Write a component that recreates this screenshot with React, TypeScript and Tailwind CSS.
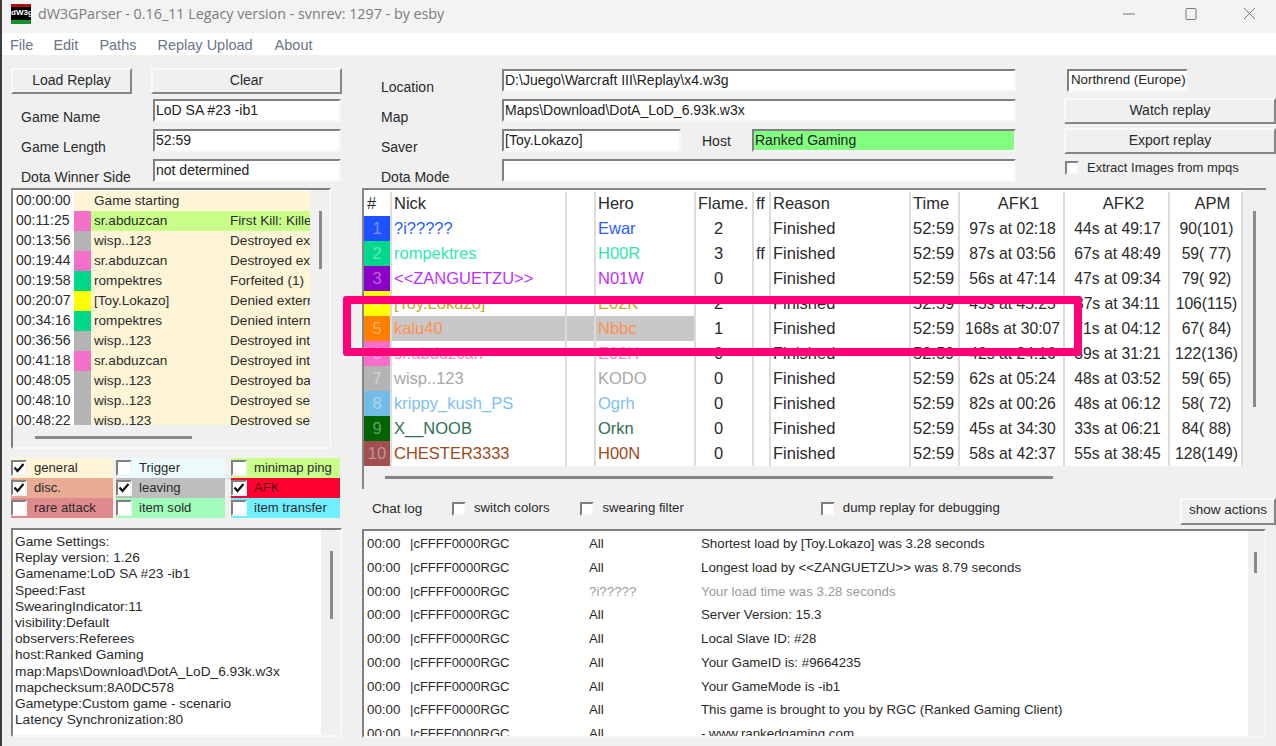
import React from "react";

const sunken = "border-2 border-t-[#808080] border-l-[#808080] border-r-[#f7f7f7] border-b-[#f7f7f7]";
const raised = "border-2 border-t-[#fafafa] border-l-[#fafafa] border-r-[#858585] border-b-[#858585] bg-[#f0f0f0] flex items-center justify-center pb-[2px] text-[#2a2a2a]";

function Box({ checked = false, small = false }: { checked?: boolean; small?: boolean }) {
  return (
    <span className={`shrink-0 ${small ? "w-[14px] h-[14px]" : "w-[16px] h-[16px]"} bg-white border-2 border-t-[#808080] border-l-[#808080] border-r-[#f4f4f4] border-b-[#f4f4f4] flex items-center justify-center`}>
      {checked && (
        <svg width="12" height="12" viewBox="0 0 12 12">
          <path d="M1.5 5.5 L4.5 9 L10.5 2" fill="none" stroke="#111" strokeWidth="2.2" />
        </svg>
      )}
    </span>
  );
}

function Input({ value, w, bg = "bg-white" }: { value: string; w: string; bg?: string }) {
  return <div className={`${sunken} ${w} ${bg} h-[23px] pl-[1px] leading-[18px] whitespace-nowrap overflow-hidden text-[#222]`}>{value}</div>;
}

const events = [
  ["00:00:00", "bg-[#fdf5d6]", "Game starting", "", "bg-[#fdf5d6]"],
  ["00:11:25", "bg-[#f570c8]", "sr.abduzcan", "First Kill: Killed", "bg-[#c8ff8a]"],
  ["00:13:56", "bg-[#b4b4b4]", "wisp..123", "Destroyed ex", "bg-[#fdf5d6]"],
  ["00:19:44", "bg-[#f570c8]", "sr.abduzcan", "Destroyed ex", "bg-[#fdf5d6]"],
  ["00:19:58", "bg-[#00d888]", "rompektres", "Forfeited (1)", "bg-[#fdf5d6]"],
  ["00:20:07", "bg-[#ffff00]", "[Toy.Lokazo]", "Denied extern", "bg-[#fdf5d6]"],
  ["00:34:16", "bg-[#00d888]", "rompektres", "Denied interm", "bg-[#fdf5d6]"],
  ["00:36:56", "bg-[#b4b4b4]", "wisp..123", "Destroyed int", "bg-[#fdf5d6]"],
  ["00:41:18", "bg-[#f570c8]", "sr.abduzcan", "Destroyed int", "bg-[#fdf5d6]"],
  ["00:48:05", "bg-[#b4b4b4]", "wisp..123", "Destroyed ba", "bg-[#fdf5d6]"],
  ["00:48:10", "bg-[#b4b4b4]", "wisp..123", "Destroyed se", "bg-[#fdf5d6]"],
  ["00:48:22", "bg-[#b4b4b4]", "wisp..123", "Destroyed se", "bg-[#fdf5d6]"],
];

const filters: [string, boolean, string][] = [
  ["general", true, "bg-[#fdf5d6]"],
  ["Trigger", false, "bg-[#ebfbfb]"],
  ["minimap ping", false, "bg-[#c8ff8a]"],
  ["disc.", true, "bg-[#e8ab93]"],
  ["leaving", true, "bg-[#bebebe]"],
  ["AFK", true, "bg-[#ff0030]"],
  ["rare attack", false, "bg-[#e08a90]"],
  ["item sold", false, "bg-[#a0fcb8]"],
  ["item transfer", false, "bg-[#70f0ff]"],
];

const settings = [
  "Game Settings:",
  "Replay version: 1.26",
  "Gamename:LoD SA #23 -ib1",
  "Speed:Fast",
  "SwearingIndicator:11",
  "visibility:Default",
  "observers:Referees",
  "host:Ranked Gaming",
  "map:Maps\\Download\\DotA_LoD_6.93k.w3x",
  "mapchecksum:8A0DC578",
  "Gametype:Custom game - scenario",
  "Latency Synchronization:80",
];

const players = [
  ["1", "bg-[#1f52ff]", "text-[#2b5cff]", "?i?????", "Ewar", "2", "", "97s at 02:18", "44s at 49:17", "90(101)"],
  ["2", "bg-[#00d98c]", "text-[#30e8b0]", "rompektres", "H00R", "3", "ff", "87s at 03:56", "67s at 48:49", "59( 77)"],
  ["3", "bg-[#8a00c8]", "text-[#c030ff]", "<<ZANGUETZU>>", "N01W", "0", "", "56s at 47:14", "47s at 09:34", "79( 92)"],
  ["4", "bg-[#ffff00]", "text-[#c8a820]", "[Toy.Lokazo]", "E02K", "2", "", "45s at 45:25", "37s at 34:11", "106(115)"],
  ["5", "bg-[#ff8000]", "text-[#ff9050]", "kalu40", "Nbbc", "1", "", "168s at 30:07", "71s at 04:12", "67( 84)"],
  ["6", "bg-[#f66ec8]", "text-[#ff80d0]", "sr.abduzcan", "E02H", "0", "", "42s at 24:16", "39s at 31:21", "122(136)"],
  ["7", "bg-[#b4b4b4]", "text-[#a8a8a8]", "wisp..123", "KODO", "0", "", "62s at 05:24", "48s at 03:52", "59( 65)"],
  ["8", "bg-[#74bce8]", "text-[#80c0f0]", "krippy_kush_PS", "Ogrh", "0", "", "82s at 00:26", "48s at 06:12", "58( 72)"],
  ["9", "bg-[#006400]", "text-[#2e7050]", "X__NOOB", "Orkn", "0", "", "45s at 34:30", "33s at 06:21", "84( 88)"],
  ["10", "bg-[#a05050]", "text-[#a04a20]", "CHESTER3333", "H00N", "0", "", "58s at 42:37", "55s at 38:45", "128(149)"],
];

const chat: [string, string, boolean][] = [
  ["All", "Shortest load by [Toy.Lokazo] was 3.28 seconds", false],
  ["All", "Longest load by <<ZANGUETZU>> was 8.79 seconds", false],
  ["?i?????", "Your load time was 3.28 seconds", true],
  ["All", "Server Version: 15.3", false],
  ["All", "Local Slave ID: #28", false],
  ["All", "Your GameID is: #9664235", false],
  ["All", "Your GameMode is -ib1", false],
  ["All", "This game is brought to you by RGC (Ranked Gaming Client)", false],
  ["All", "- www.rankedgaming.com", false],
];

const cols = "grid grid-cols-[28px_175px_29px_100px_58px_17px_140px_49px_105px_105px_73px]";
const cell = "border-r-2 border-[#dcdcdc] pl-[2px] whitespace-nowrap overflow-hidden";

export default function App() {
  return (
    <div className="relative w-[1276px] h-[746px] overflow-hidden bg-[#f0f0f0] border-l-2 border-[#3c3c3c] text-[14px] text-[#2a2a2a] font-['Liberation_Sans',Arial,sans-serif]">
      {/* title bar */}
      <div className="h-[33px] bg-[#f3f3f3] flex items-center pl-[9px] pb-[6px]">
        <div className="w-[20px] h-[20px] bg-black flex flex-col justify-between">
          <div className="h-[3px] bg-[#b01010]" />
          <span className="text-white font-bold text-[8px] leading-none text-center">dW3g</span>
          <div className="h-[4px] bg-[#159030]" />
        </div>
        <span className="ml-[7px] text-[14.3px] text-[#7c7c7c] font-['Open_Sans',sans-serif] whitespace-nowrap">dW3GParser - 0.16_11 Legacy version - svnrev: 1297 - by esby</span>
        <div className="ml-auto flex items-center text-[#777]">
          <svg className="mr-[50px]" width="12" height="12" viewBox="0 0 12 12"><path d="M0 6h12" stroke="#777" /></svg>
          <svg className="mr-[46px]" width="12" height="12" viewBox="0 0 12 12"><rect x="1" y="0.5" width="10" height="11" rx="1" fill="none" stroke="#777" /></svg>
          <svg className="mr-[20px]" width="13" height="13" viewBox="0 0 13 13"><path d="M1 1l11 11M12 1L1 12" stroke="#777" /></svg>
        </div>
      </div>
      {/* menu */}
      <div className="h-[22px] bg-white flex items-center pt-[3px] text-[14.5px] text-[#687487]">
        <span className="ml-[8px]">File</span>
        <span className="ml-[20px]">Edit</span>
        <span className="ml-[21px]">Paths</span>
        <span className="ml-[21px]">Replay Upload</span>
        <span className="ml-[22px]">About</span>
      </div>

      <div className="flex pl-[9px]">
        {/* left column */}
        <div className="w-[351px] shrink-0 pt-[13px]">
          <div className="flex">
            <button className={`${raised} w-[121px] h-[26px]`}>Load Replay</button>
            <button className={`${raised} w-[191px] h-[26px] ml-[19px]`}>Clear</button>
          </div>
          <div className="flex flex-col gap-[7px] mt-[5px]">
            {[["Game Name", "LoD SA #23 -ib1"], ["Game Length", "52:59"], ["Dota Winner Side", "not determined"]].map(([l, v]) => (
              <div key={l} className="flex h-[23px]">
                <span className="w-[142px] pl-[10px] pt-[8px] whitespace-nowrap">{l}</span>
                <Input value={v} w="w-[188px]" />
              </div>
            ))}
          </div>
          <div className={`${sunken} w-[320px] h-[261px] mt-[6px] flex`}>
            <div className="w-[297px] h-[235px] overflow-hidden bg-white pl-[1px] pt-[1px] text-[13.6px]">
              {events.map((e) => (
                <div key={e[0]} className="flex h-[20px] leading-[19px]">
                  <span className="w-[60px] pl-[2px] shrink-0 text-[14px]">{e[0]}</span>
                  <span className={`w-[17px] shrink-0 ${e[1]}`} />
                  <div className={`w-[138px] shrink-0 pl-[3px] whitespace-nowrap ${e[4]}`}>{e[2]}</div>
                  <div className={`flex-1 pl-[1px] whitespace-nowrap overflow-hidden ${e[4]}`}>{e[3]}</div>
                </div>
              ))}
            </div>
            <div className="w-[3px] h-[58px] ml-[9px] mt-[21px] bg-[#8a8a8a]" />
          </div>
          <div className="w-[320px] h-0 relative">
            <div className="absolute left-[24px] top-[-13px] w-[157px] h-[3px] bg-[#8a8a8a]" />
          </div>
          <div className="grid grid-cols-[102px_109px_112px] gap-x-[3px] w-[331px] mt-[9px] text-[13.1px]">
            {filters.map(([l, c, bg], i) => (
              <div key={l} className={`h-[20px] flex items-center ${bg} ${i % 3 === 2 ? "ml-[3px]" : ""}`}>
                <Box checked={c} />
                <span className={`ml-[7px] whitespace-nowrap ${l === "AFK" ? "text-[#5a0010]" : ""}`}>{l}</span>
              </div>
            ))}
          </div>
          <div className={`${sunken} w-[331px] h-[209px] mt-[10px] flex`}>
            <div className="w-[308px] h-full bg-white pl-[2px] pt-[4px] text-[13.7px] leading-[16.2px] whitespace-nowrap overflow-hidden">
              {settings.map((s) => <div key={s}>{s}</div>)}
            </div>
            <div className="w-[3px] h-[68px] ml-[9px] mt-[21px] bg-[#8a8a8a]" />
          </div>
        </div>

        {/* right column */}
        <div className="flex-1 min-w-0">
          <div className="flex h-[133px] pt-[14px]">
            <div className="w-[654px] shrink-0">
              {[
                ["Location", "D:\\Juego\\Warcraft III\\Replay\\x4.w3g"],
                ["Map", "Maps\\Download\\DotA_LoD_6.93k.w3x"],
              ].map(([l, v]) => (
                <div key={l} className="flex h-[23px] mb-[7px]">
                  <span className="w-[140px] pl-[19px] pt-[8px]">{l}</span>
                  <Input value={v} w="w-[514px]" />
                </div>
              ))}
              <div className="flex h-[23px] mb-[7px]">
                <span className="w-[140px] pl-[19px] pt-[8px]">Saver</span>
                <Input value="[Toy.Lokazo]" w="w-[179px]" />
                <span className="w-[71px] pl-[21px] pt-[2px]">Host</span>
                <Input value="Ranked Gaming" w="w-[264px]" bg="bg-[#80ff80]" />
              </div>
              <div className="flex h-[23px]">
                <span className="w-[140px] pl-[19px] pt-[8px]">Dota Mode</span>
                <Input value="" w="w-[514px]" />
              </div>
            </div>
            <div className="ml-[48px] flex-1">
              <div className="ml-[3px]"><Input value="Northrend (Europe)" w="w-[121px] text-[13.3px] pl-[2px]" /></div>
              <button className={`${raised} w-[212px] h-[26px] mt-[6px]`}>Watch replay</button>
              <button className={`${raised} w-[212px] h-[26px] mt-[4px]`}>Export replay</button>
              <div className="flex items-center mt-[6px] ml-[1px] h-[16px] text-[13px]">
                <Box small />
                <span className="ml-[8px] whitespace-nowrap">Extract Images from mpqs</span>
              </div>
            </div>
          </div>

          {/* players table */}
          <div className="w-[904px] h-[301px] border-t-2 border-l-2 border-[#858585] flex">
            <div className="w-[879px] shrink-0">
              <div className="bg-white text-[16.5px] text-[#2a2a2a] pt-[2px]">
                <div className={`${cols} h-[24px] leading-[22px]`}>
                  <div className={`${cell} pl-[3px]`}>#</div>
                  <div className={cell}>Nick</div>
                  <div className={cell}></div>
                  <div className={cell}>Hero</div>
                  <div className={cell}>Flame.</div>
                  <div className={cell}>ff</div>
                  <div className={cell}>Reason</div>
                  <div className={cell}>Time</div>
                  <div className={`${cell} text-center pl-[14px]`}>AFK1</div>
                  <div className={`${cell} text-center pl-[14px]`}>AFK2</div>
                  <div className={`${cell} text-center pl-[14px]`}>APM</div>
                </div>
                {players.map((p) => {
                  const hi = p[0] === "5" ? "bg-[#c8c8c8]" : "";
                  return (
                    <div key={p[0]} className={`${cols} h-[25px] leading-[25px]`}>
                      <div className={`${p[1]} text-center text-white/40 border-r-2 border-[#dcdcdc]`}>{p[0]}</div>
                      <div className={`${cell} ${p[2]} ${hi}`}>{p[3]}</div>
                      <div className={`${cell} ${hi}`}></div>
                      <div className={`${cell} ${p[2]} ${hi}`}>{p[4]}</div>
                      <div className={`${cell} pl-[18px]`}>{p[5]}</div>
                      <div className={cell}>{p[6]}</div>
                      <div className={cell}>Finished</div>
                      <div className={cell}>52:59</div>
                      <div className={`${cell} text-center text-[15.7px]`}>{p[7]}</div>
                      <div className={`${cell} text-center text-[15.7px]`}>{p[8]}</div>
                      <div className={`${cell} text-center text-[15.7px]`}>{p[9]}</div>
                    </div>
                  );
                })}
              </div>
              <div className="w-[668px] h-[3px] ml-[21px] mt-[10px] bg-[#858585]" />
            </div>
            <div className="w-[3px] h-[196px] ml-[10px] mt-[21px] bg-[#8a8a8a]" />
          </div>

          {/* chat toolbar */}
          <div className="flex items-start h-[40px] pt-[9px] text-[13.2px]">
            <span className="ml-[10px] mt-[1px] w-[50px] text-[13.5px] whitespace-nowrap">Chat log</span>
            <span className="ml-[30px] mt-[4px]"><Box small /></span>
            <span className="ml-[8px] whitespace-nowrap">switch colors</span>
            <span className="ml-[31px] mt-[4px]"><Box small /></span>
            <span className="ml-[8px] whitespace-nowrap">swearing filter</span>
            <span className="ml-[137px] mt-[4px]"><Box small /></span>
            <span className="ml-[8px] whitespace-nowrap">dump replay for debugging</span>
            <button className={`${raised} w-[96px] h-[27px] ml-auto text-[13.5px]`}>show actions</button>
          </div>

          {/* chat log */}
          <div className={`${sunken} w-[904px] h-[209px] flex`}>
            <div className="w-[884px] h-full bg-white overflow-hidden pt-[1px] text-[13.3px]">
              {chat.map((c, i) => (
                <div key={i} className={`grid grid-cols-[43px_179px_112px_1fr] pl-[3px] h-[23.75px] leading-[23px] whitespace-nowrap ${c[2] ? "text-[#9a9a9a]" : ""}`}>
                  <span className="text-[#2a2a2a]">00:00</span>
                  <span className="text-[#2a2a2a] text-[13px]">|cFFFF0000RGC</span>
                  <span>{c[0]}</span>
                  <span>{c[1]}</span>
                </div>
              ))}
            </div>
            <div className="w-[3px] h-[21px] ml-[6px] mt-[21px] bg-[#8a8a8a]" />
          </div>
        </div>
      </div>

      {/* annotation */}
      <div className="absolute left-[341px] top-[296px] w-[739px] h-[60px] border-[8px] border-[#ff0078] rounded-[3px]" />
    </div>
  );
}
